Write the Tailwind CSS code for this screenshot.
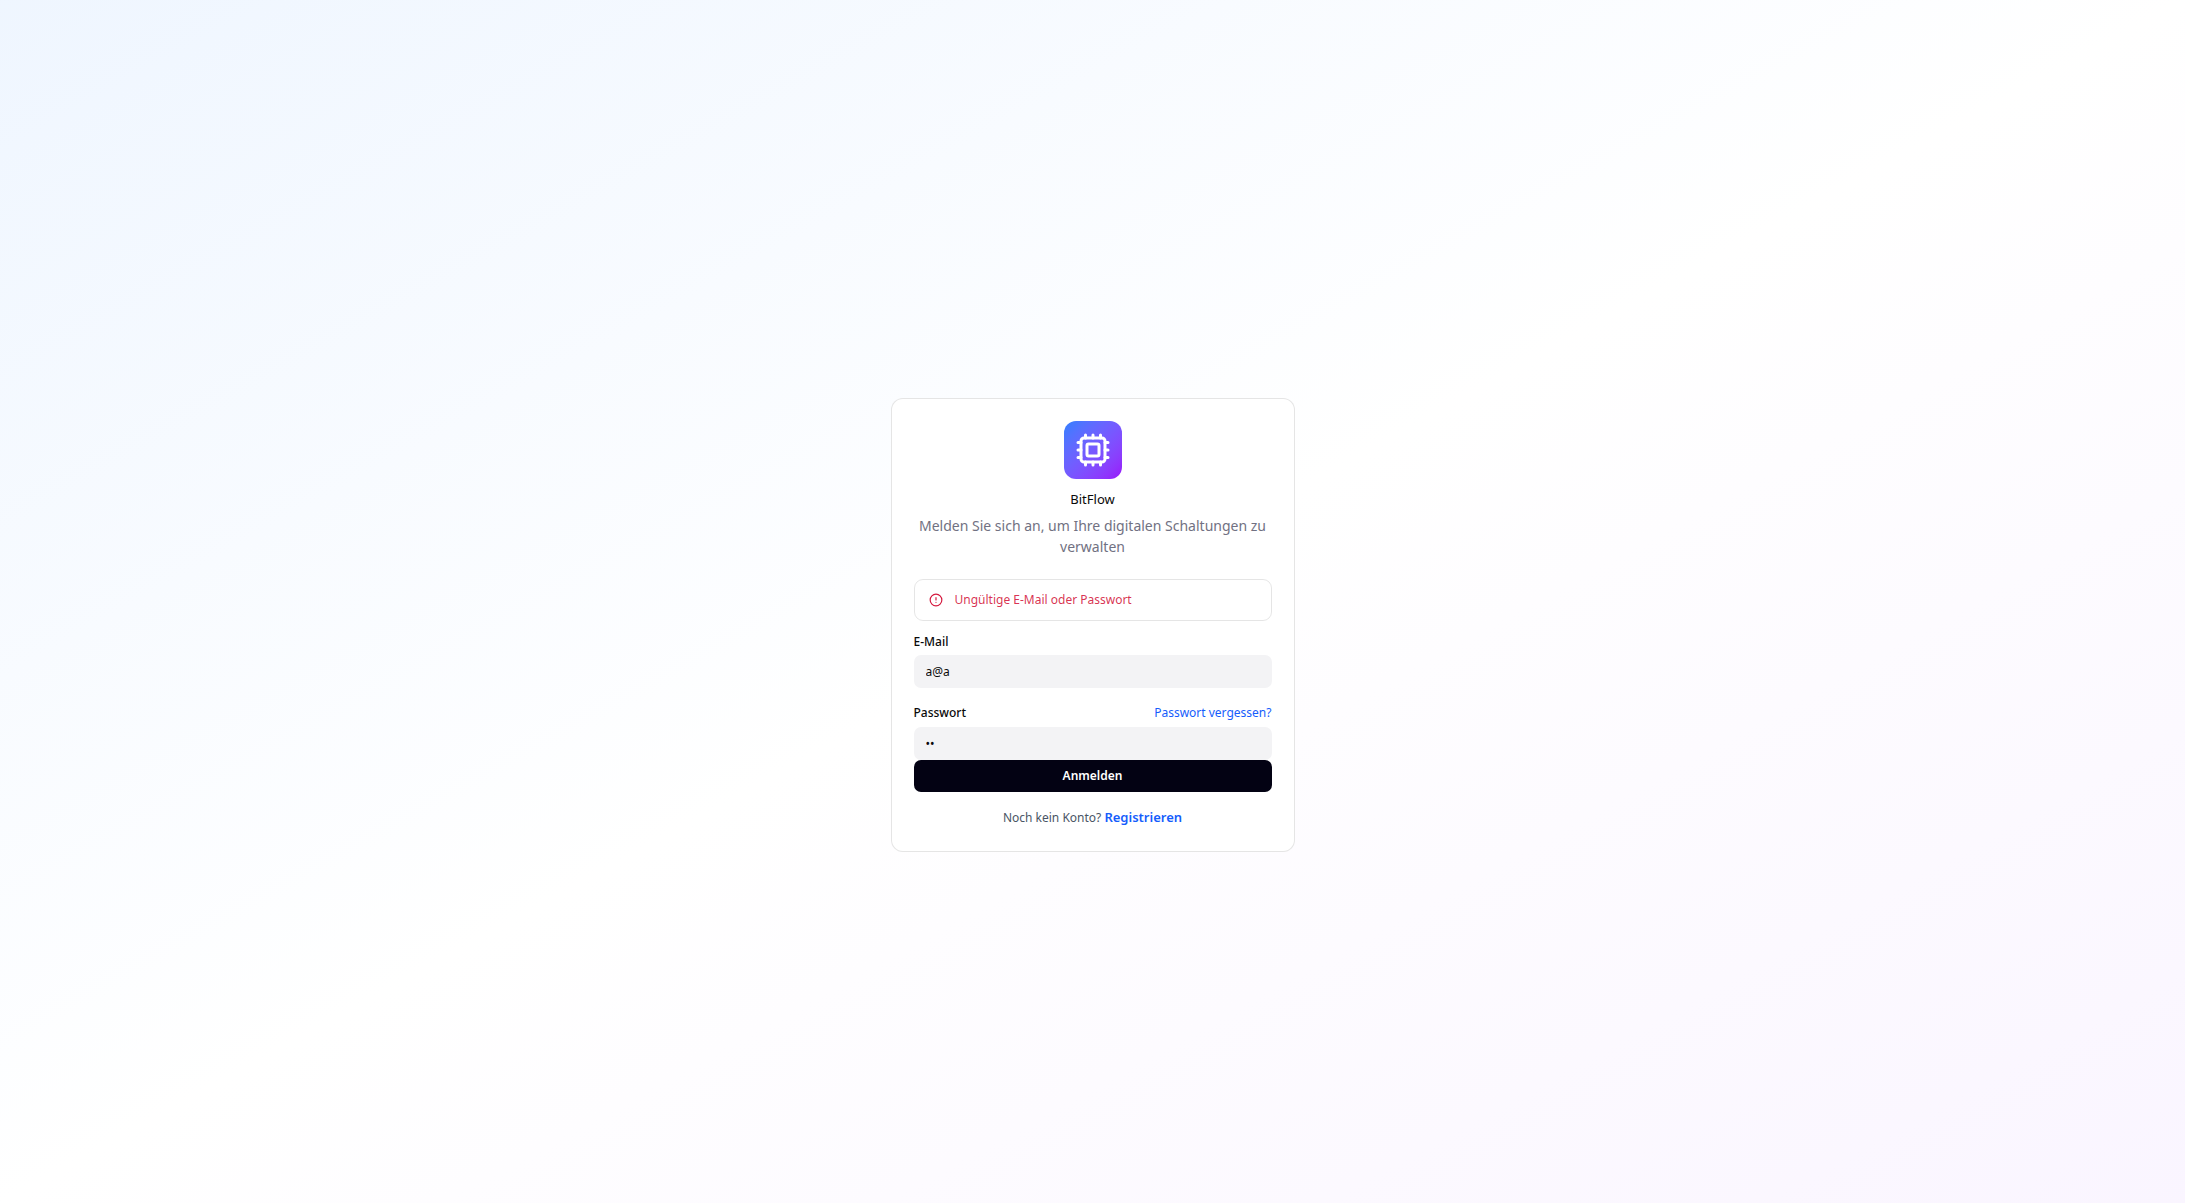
<!DOCTYPE html>
<html lang="de">
<head>
<meta charset="utf-8">
<meta name="viewport" content="width=device-width, initial-scale=1">
<title>BitFlow – Anmelden</title>
<script src="https://cdn.jsdelivr.net/npm/@tailwindcss/browser@4"></script>
</head>
<body class="font-['Segoe_UI','Noto_Sans',sans-serif] text-[12px] leading-[18px] text-neutral-950">
<main class="flex min-h-screen items-center justify-center bg-gradient-to-br from-blue-50 via-white to-purple-50 px-4 pt-[62px] pb-4">
  <div class="w-full max-w-[404px] rounded-xl border border-black/10 bg-white px-[22px] pt-[22px] pb-6">
    <header class="flex flex-col items-center text-center">
      <div class="mb-3 flex size-[58px] items-center justify-center rounded-xl bg-gradient-to-br from-blue-500 to-purple-600 text-white">
        <svg class="size-9" viewBox="0 0 24 24" fill="none" stroke="currentColor" stroke-width="2" stroke-linecap="round" stroke-linejoin="round" aria-hidden="true">
          <path d="M12 20v2M12 2v2M17 20v2M17 2v2M2 12h2M2 17h2M2 7h2M20 12h2M20 17h2M20 7h2M7 20v2M7 2v2"/>
          <rect x="4" y="4" width="16" height="16" rx="2"/>
          <rect x="8" y="8" width="8" height="8" rx="1"/>
        </svg>
      </div>
      <h1 class="text-[13px] leading-4">BitFlow</h1>
      <p class="mt-2 text-[14px] leading-[21px] text-[#717182]">Melden Sie sich an, um Ihre digitalen Schaltungen zu verwalten</p>
    </header>
    <form class="mt-[22px]" onsubmit="return false">
      <div role="alert" class="flex items-center gap-3 rounded-[9px] border border-black/10 px-3.5 py-2.5 leading-5 text-[#d4183d]">
        <svg class="size-[14px]" viewBox="0 0 24 24" fill="none" stroke="currentColor" stroke-width="2" stroke-linecap="round" stroke-linejoin="round" aria-hidden="true">
          <circle cx="12" cy="12" r="10"/><path d="M12 8v4M12 16h.01"/>
        </svg>
        <p class="text-[#d4183d]/90">Ungültige E-Mail oder Passwort</p>
      </div>
      <div class="mt-3">
        <label for="email" class="block font-medium">E-Mail</label>
        <input id="email" type="text" value="a@a" class="mt-1 block h-[33px] w-full rounded-[7px] bg-[#f3f3f5] px-3">
      </div>
      <div class="mt-4">
        <div class="flex items-center justify-between">
          <label for="password" class="font-medium">Passwort</label>
          <a href="#" class="text-blue-600">Passwort vergessen?</a>
        </div>
        <input id="password" type="password" value="aa" class="mt-[5px] block h-[33px] w-full rounded-[7px] bg-[#f3f3f5] px-3">
      </div>
      <button type="submit" class="block h-8 w-full rounded-[7px] bg-[#030213] font-semibold text-white">Anmelden</button>
      <p class="mt-4 text-center text-gray-600">Noch kein Konto? <a href="#" class="text-[13px] font-semibold text-blue-600">Registrieren</a></p>
    </form>
  </div>
</main>
</body>
</html>
